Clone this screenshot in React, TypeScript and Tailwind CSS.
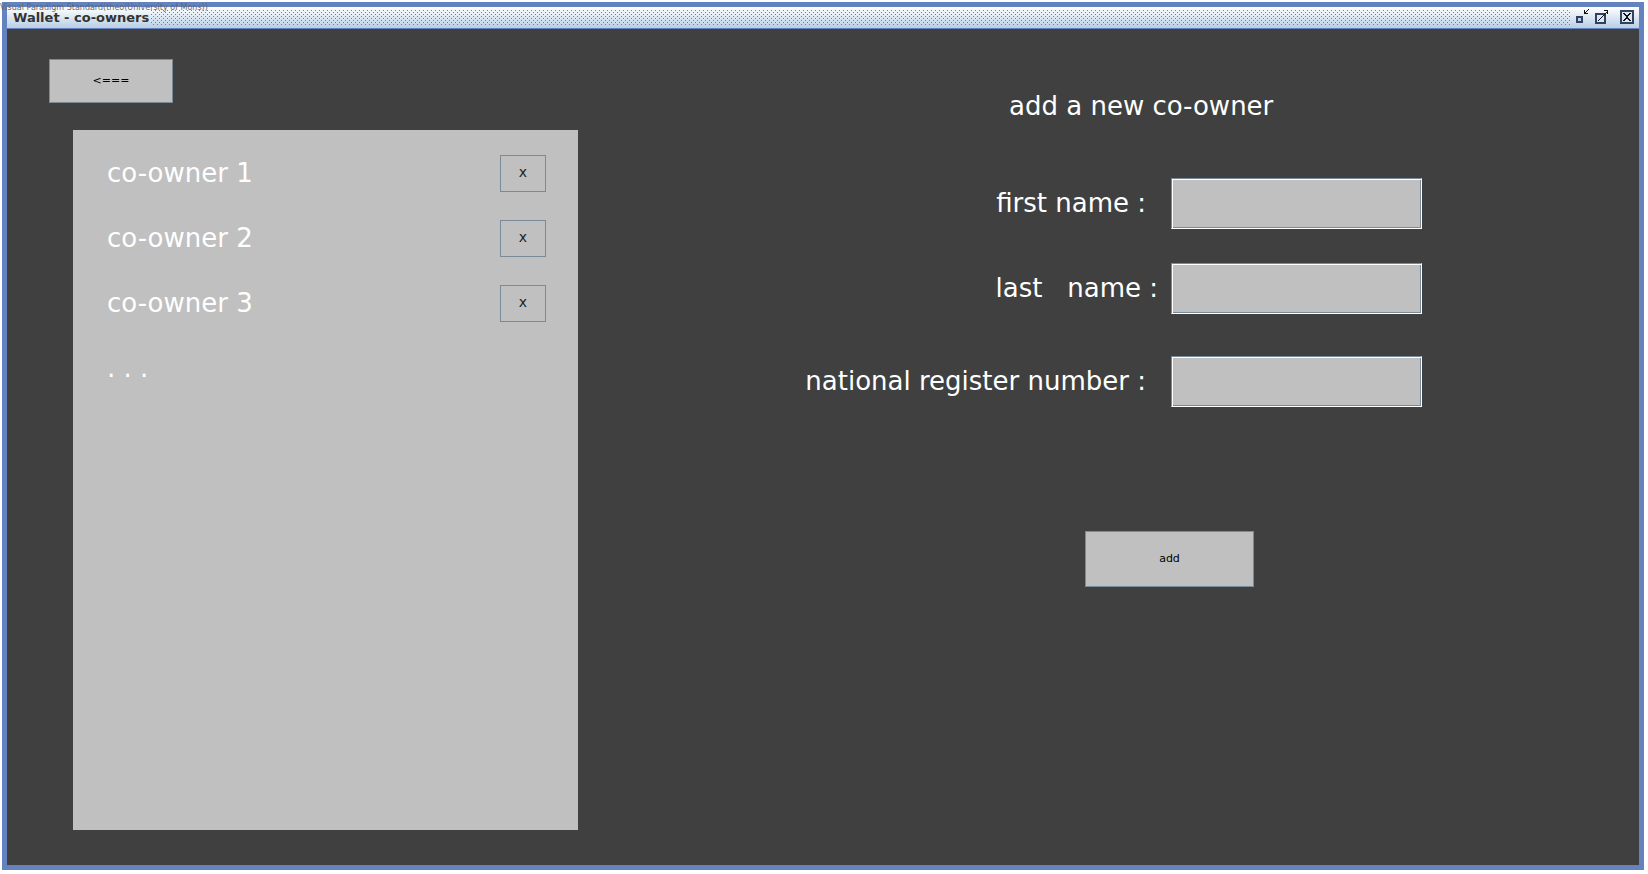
import { useState, type ReactNode } from "react";

const owners = ["co-owner 1", "co-owner 2", "co-owner 3"];

const fields = [
  { id: "first", label: "first name :", row: "mt-14", pad: "pr-[25px]" },
  { id: "last", label: "last   name :", row: "mt-[34px]", pad: "pr-[13px]" },
  { id: "register", label: "national register number :", row: "mt-[42px]", pad: "pr-[25px]" },
];

function WindowButton({ label, children }: { label: string; children: ReactNode }) {
  return (
    <button type="button" aria-label={label} className="block">
      <svg width="15" height="17" viewBox="0 0 15 17" shapeRendering="crispEdges" aria-hidden="true">
        {children}
      </svg>
    </button>
  );
}

function TitleBar() {
  return (
    <header className="flex h-[22px] items-center border-b border-[#6382bf] bg-linear-to-b from-white to-[#b8cfe5] pl-1.5 pr-1">
      <h1 className="text-[13px] leading-4 font-bold text-[#333333]">Wallet - co-owners</h1>
      <svg className="mb-0.5 ml-0.5 h-4 min-w-0 flex-1 self-end" shapeRendering="crispEdges" aria-hidden="true">
        <defs>
          <pattern id="bumps" width="4" height="4" patternUnits="userSpaceOnUse">
            <path d="M0 0h1v1H0zM2 2h1v1H2z" fill="#6382a8" />
          </pattern>
        </defs>
        <rect width="100%" height="100%" fill="url(#bumps)" />
      </svg>
      <div className="ml-1 flex items-center">
        <WindowButton label="Minimize">
          <path d="M2 8h5v5H2z" fill="#b8cfe5" stroke="#33405f" strokeWidth="2" />
          <path d="M9 1h1v3h3v1H9zM11 2h1v1h-1zM10 3h1v1h-1zM12 1h1v1h-1zM13 0h1v1h-1z" fill="#111111" />
        </WindowButton>
        <span className="w-1" />
        <WindowButton label="Maximize">
          <path d="M2 5h9v9H2z" fill="#dbe7f2" stroke="#33405f" strokeWidth="2" />
          <path d="M10 1h4v4h-1V2h-3z" fill="#111111" />
          <path d="M4 11h1v1H4zM5 10h1v1H5zM6 9h1v1H6zM7 8h1v1H7zM8 7h1v1H8zM9 6h1v1H9zM10 5h1v1h-1zM11 4h1v1h-1zM12 3h1v1h-1z" fill="#111111" />
        </WindowButton>
        <span className="w-[11px]" />
        <WindowButton label="Close">
          <path d="M1 2h12v12H1z" fill="#dbe7f2" stroke="#33405f" strokeWidth="2" />
          <path d="M3 4h2v1H3zM4 5h2v1H4zM5 6h2v1H5zM9 4h2v1H9zM8 5h2v1H8zM7 6h2v1H7zM6 7h2v2H6zM5 9h2v1H5zM7 9h2v1H7zM4 10h2v1H4zM8 10h2v1H8zM3 11h2v1H3zM9 11h2v1H9z" fill="#111111" />
        </WindowButton>
      </div>
    </header>
  );
}

export default function App() {
  const [values, setValues] = useState<Record<string, string>>({});

  return (
    <div className="relative flex min-h-screen flex-col bg-white pt-0.5 pr-1 pb-1 pl-0.5 font-['DejaVu_Sans',sans-serif]">
      <div className="flex flex-1 flex-col border-[5px] border-[#6382bf]">
        <TitleBar />
        <main className="flex flex-1 bg-[#404040]">
          <section aria-label="Co-owners" className="flex w-[571px] shrink-0 flex-col items-start pt-[30px] pb-[35px] pl-[42px]">
            <button type="button" className="h-11 w-31 border border-[#7a8a99] bg-[#c0c0c0] text-[11px] text-black">
              {"<==="}
            </button>
            <div className="mt-[27px] ml-6 w-[505px] flex-1 self-start bg-[#c0c0c0] pt-[25px] pr-8 pl-[34px]">
              <ul className="flex flex-col gap-7">
                {owners.map((owner) => (
                  <li key={owner} className="flex h-[37px] items-center justify-between text-[26px] text-white">
                    <span>{owner}</span>
                    <button type="button" aria-label={`Remove ${owner}`} className="h-[37px] w-[46px] border border-[#7a8a99] pb-0.5 text-[14px] text-[#222222]">
                      x
                    </button>
                  </li>
                ))}
              </ul>
              <p className="mt-7 text-[26px] leading-9 text-white">. . .</p>
            </div>
          </section>
          <form className="flex min-w-0 flex-1 flex-col pt-[61px]" onSubmit={(e) => e.preventDefault()}>
            <h2 className="ml-[431px] text-[26px] leading-8 text-white">add a new co-owner</h2>
            {fields.map((f) => (
              <div key={f.id} className={`flex items-center ${f.row}`}>
                <label htmlFor={f.id} className={`w-[593px] shrink-0 text-right text-[26px] whitespace-pre text-white ${f.pad}`}>
                  {f.label}
                </label>
                <input
                  id={f.id}
                  value={values[f.id] ?? ""}
                  onChange={(e) => setValues({ ...values, [f.id]: e.target.value })}
                  className="h-[51px] w-[251px] border border-t-[#7a8a99] border-r-white border-b-white border-l-[#7a8a99] bg-[#c0c0c0] px-2 text-[26px] shadow-[inset_1px_1px_0_#ffffff,inset_-1px_-1px_0_#7a8a99]"
                />
              </div>
            ))}
            <button type="submit" className="mt-[124px] ml-[507px] h-14 w-[169px] border border-[#7a8a99] bg-[#c0c0c0] text-[11px] text-black">
              add
            </button>
          </form>
        </main>
      </div>
      <p className="absolute top-0 left-0 text-[8px] leading-4 text-[#666666]">Visual Paradigm Standard(theo(University of Mons))</p>
    </div>
  );
}
